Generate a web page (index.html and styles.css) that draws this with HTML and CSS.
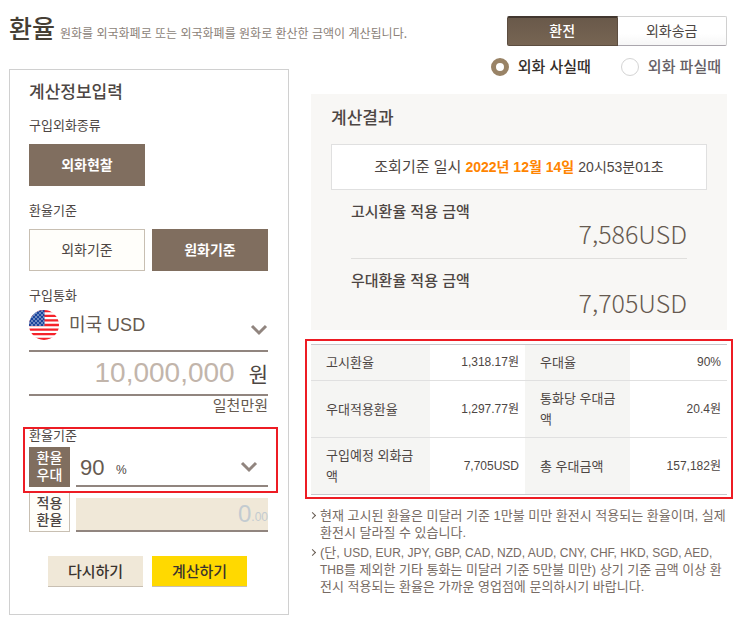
FILE: index.html
```html
<!DOCTYPE html>
<html lang="ko">
<head>
    <meta charset="UTF-8">
    <meta name="viewport" content="width=device-width, initial-scale=1.0">
    <title>환율</title>
    <link rel="stylesheet" href="styles.css">
</head>
<body>
    <div class="page">
        <div class="left">
            <header class="title">
                <h1>환율</h1>
                <p>원화를 외국화폐로 또는 외국화폐를 원화로 환산한 금액이 계산됩니다.</p>
            </header>

            <form class="card">
                <h2>계산정보입력</h2>

                <div class="group">
                    <div class="label">구입외화종류</div>
                    <div class="choices">
                        <button type="button" class="choice active">외화현찰</button>
                    </div>
                </div>

                <div class="group">
                    <div class="label">환율기준</div>
                    <div class="choices">
                        <button type="button" class="choice">외화기준</button>
                        <button type="button" class="choice active">원화기준</button>
                    </div>
                </div>

                <div class="group">
                    <label class="label" for="currency">구입통화</label>
                    <div class="currency">
                        <svg class="flag" viewBox="0 0 30 30" aria-hidden="true">
                            <defs>
                                <clipPath id="round"><circle cx="15" cy="15" r="15"/></clipPath>
                                <pattern id="stars" width="4" height="4" patternUnits="userSpaceOnUse">
                                    <circle cx="1" cy="1" r="0.7" fill="#fff"/>
                                    <circle cx="3" cy="3" r="0.7" fill="#fff"/>
                                </pattern>
                            </defs>
                            <g clip-path="url(#round)">
                                <rect width="30" height="30" fill="#fff"/>
                                <path stroke="#f5222a" stroke-width="2.3" d="M0 1.1h30M0 5.8h30M0 10.4h30M0 15h30M0 19.6h30M0 24.2h30M0 28.9h30"/>
                                <rect width="15.5" height="16" fill="#1c469c"/>
                                <rect width="15.5" height="16" fill="url(#stars)"/>
                            </g>
                        </svg>
                        <select id="currency">
                            <option>미국 USD</option>
                        </select>
                        <svg class="arrow" viewBox="0 0 18 12" aria-hidden="true"><path d="M2 2l7 7 7-7"/></svg>
                    </div>
                    <div class="amount">
                        <input type="text" id="amount" value="10,000,000" aria-label="금액">
                        <label for="amount">원</label>
                    </div>
                    <div class="amount-text">일천만원</div>
                </div>

                <div class="rate">
                    <div class="marked">
                        <div class="label">환율기준</div>
                        <div class="rate-row">
                            <label class="tag active" for="discount">환율<br>우대</label>
                            <div class="field">
                                <select id="discount">
                                    <option>90</option>
                                </select>
                                <span class="percent">%</span>
                                <svg class="arrow" viewBox="0 0 18 12" aria-hidden="true"><path d="M2 2l7 7 7-7"/></svg>
                            </div>
                        </div>
                    </div>
                    <div class="rate-row">
                        <label class="tag" for="applied">적용<br>환율</label>
                        <div class="field disabled">
                            <input type="text" id="applied" value="0" disabled>
                            <span class="decimals">.00</span>
                        </div>
                    </div>
                </div>

                <div class="actions">
                    <button type="reset">다시하기</button>
                    <button type="button" class="primary">계산하기</button>
                </div>
            </form>
        </div>

        <div class="right">
            <div class="tabs">
                <button type="button" class="tab active">환전</button>
                <button type="button" class="tab">외화송금</button>
            </div>
            <div class="radios">
                <label><input type="radio" name="side" checked>외화 사실때</label>
                <label><input type="radio" name="side">외화 파실때</label>
            </div>

            <section class="result">
                <h2>계산결과</h2>
                <div class="date">조회기준 일시 <strong>2022년 12월 14일</strong> <span>20시53분01초</span></div>
                <dl>
                    <div class="item">
                        <dt>고시환율 적용 금액</dt>
                        <dd>7,586USD</dd>
                    </div>
                    <div class="item">
                        <dt>우대환율 적용 금액</dt>
                        <dd>7,705USD</dd>
                    </div>
                </dl>
            </section>

            <div class="marked rates">
                <table>
                    <colgroup>
                        <col class="th1">
                        <col class="td1">
                        <col class="th2">
                        <col>
                    </colgroup>
                    <tr>
                        <th scope="row">고시환율</th>
                        <td>1,318.17원</td>
                        <th scope="row">우대율</th>
                        <td>90%</td>
                    </tr>
                    <tr>
                        <th scope="row">우대적용환율</th>
                        <td>1,297.77원</td>
                        <th scope="row">통화당 우대금액</th>
                        <td>20.4원</td>
                    </tr>
                    <tr>
                        <th scope="row">구입예정 외화금액</th>
                        <td>7,705USD</td>
                        <th scope="row">총 우대금액</th>
                        <td>157,182원</td>
                    </tr>
                </table>
            </div>

            <ul class="notes">
                <li>현재 고시된 환율은 미달러 기준 1만불 미만 환전시 적용되는 환율이며, 실제 환전시 달라질 수 있습니다.</li>
                <li>(단, <span class="codes">USD, EUR, JPY, GBP, CAD, NZD, AUD, CNY, CHF, HKD, SGD, AED, THB</span>를 제외한 기타 통화는 미달러 기준 5만불 미만) 상기 기준 금액 이상 환전시 적용되는 환율은 가까운 영업점에 문의하시기 바랍니다.</li>
            </ul>
        </div>
    </div>
</body>
</html>
```
FILE: styles.css
```css
* {
    box-sizing: border-box;
}

body {
    margin: 0;
    background: #fff;
    color: #4d4643;
    font-family: "Liberation Sans", "Noto Sans CJK KR", sans-serif;
    font-size: 13px;
}

h1, h2, p, dl, dd, ul {
    margin: 0;
    padding: 0;
}

button, input, select {
    font-family: inherit;
    color: inherit;
    margin: 0;
    padding: 0;
    border: 0;
    border-radius: 0;
    background: none;
}

select {
    appearance: none;
}

.page {
    display: grid;
    grid-template-columns: 280fr 416fr;
    column-gap: 22px;
    padding: 0 18px 0 9px;
}

.left, .right {
    min-width: 0;
}

/* Page title */
.title {
    display: flex;
    align-items: baseline;
    gap: 5px;
    height: 69px;
    padding-top: 11px;
    font-family: "Noto Sans CJK KR", sans-serif;
    white-space: nowrap;
}

.title h1 {
    font-size: 25px;
    font-weight: 500;
    line-height: 32px;
    color: #463f35;
}

.title p {
    font-size: 12px;
    color: #8b7f78;
}

h2 {
    font-size: 17px;
    font-weight: 500;
    line-height: 24px;
}

/* Input form */
.card {
    border: 1px solid #d0d0d0;
    padding: 11px 20px 27px 19px;
}

.group {
    margin-top: 15px;
}

h2 + .group {
    margin-top: 11px;
}

.label {
    display: block;
    line-height: 20px;
}

.choices {
    display: grid;
    grid-template-columns: 1fr 1fr;
    gap: 7px;
    margin-top: 8px;
}

.choice {
    height: 42px;
    padding-bottom: 2px;
    border: 1px solid #c8bfb2;
    background: #fffefa;
    font-size: 14px;
}

.choice.active {
    border-color: #806e5f;
    background: #806e5f;
    color: #fff;
    font-weight: bold;
}

.currency {
    display: flex;
    align-items: flex-start;
    gap: 10px;
    height: 42px;
    margin-top: 4px;
    border-bottom: 2px solid #91857f;
}

.flag {
    width: 30px;
    height: 30px;
}

.currency select {
    flex: 1;
    min-width: 0;
    height: 30px;
    font-size: 18px;
    color: #665a50;
}

.arrow {
    width: 18px;
    height: 12px;
    fill: none;
    stroke: #91857f;
    stroke-width: 3;
}

.currency .arrow {
    margin-top: 14px;
}

.amount {
    display: flex;
    align-items: center;
    gap: 14px;
    height: 44px;
    border-bottom: 2px solid #91857f;
}

.amount input {
    flex: 1;
    min-width: 0;
    font-size: 28px;
    text-align: right;
    color: #c2b5ab;
}

.amount label {
    font-size: 21px;
}

.amount-text {
    font-size: 15px;
    line-height: 20px;
    text-align: right;
    color: #665a50;
}

.rate {
    margin-top: 10px;
}

.rate-row {
    display: flex;
    align-items: flex-end;
    gap: 6px;
    margin-top: 1px;
}

.tag {
    width: 41px;
    padding: 2px 0;
    border: 1px solid #c8bfb2;
    background: #fffefa;
    font-size: 14px;
    font-weight: 500;
    line-height: 17px;
    text-align: center;
}

.tag.active {
    border-color: #806e5f;
    background: #806e5f;
    color: #fff;
}

.field {
    display: flex;
    align-items: center;
    flex: 1;
    min-width: 0;
    height: 38px;
    padding: 0 10px 0 4px;
    border-bottom: 2px solid #91857f;
}

.field select {
    width: 36px;
    font-size: 22px;
    color: #665a50;
}

.percent {
    padding-top: 6px;
    font-size: 12px;
}

.field .arrow {
    margin-left: auto;
}

.field.disabled {
    height: 34px;
    padding: 0;
    background: #f0e8d8;
    color: #c3cbd0;
}

.field input {
    flex: 1;
    min-width: 0;
    font-size: 24px;
    text-align: right;
}

.decimals {
    padding-top: 6px;
    font-size: 12px;
}

/* Red frame round the highlighted values */
.marked {
    position: relative;
}

.marked::after {
    content: "";
    position: absolute;
    inset: 1px -10px -6px -6px;
    border: 2px solid #ed1c24;
    pointer-events: none;
}

.rate .marked + .rate-row {
    margin-top: 5px;
}

.actions {
    display: flex;
    justify-content: center;
    gap: 9px;
    margin-top: 24px;
    padding-right: 2px;
}

.actions button {
    width: 95px;
    height: 31px;
    padding-bottom: 2px;
    border-bottom: 1px solid #c8bfb2;
    background: #f0e8d8;
    font-size: 15px;
    font-weight: 500;
    color: #3a332e;
}

.actions .primary {
    background: #ffd900;
}

/* Tabs and radios */
.tabs {
    display: flex;
    width: 220px;
    margin: 16px 0 0 auto;
}

.tab {
    flex: 1;
    height: 30px;
    padding-bottom: 2px;
    border: 1px solid #d0d0d0;
    border-left: 0;
    border-bottom-color: #aaa6ad;
    border-radius: 0 2px 2px 0;
    background: linear-gradient(#fff 60%, #f6f6f6);
    font-size: 14px;
}

.tab.active {
    border: 1px solid #5c4d40;
    border-top: 2px solid #42372f;
    border-radius: 2px 0 0 2px;
    background: linear-gradient(#69594a, #776553);
    color: #fff;
    font-weight: 500;
    padding-bottom: 4px;
}

.radios {
    display: flex;
    justify-content: flex-end;
    gap: 30px;
    margin-top: 11px;
    padding-right: 6px;
    font-size: 15px;
    font-weight: 500;
    line-height: 20px;
}

.radios label {
    display: flex;
    align-items: center;
    gap: 9px;
    color: #665f66;
}

.radios label:first-child {
    color: #332e2b;
}

.radios input {
    appearance: none;
    width: 18px;
    height: 18px;
    border: 1px solid #d4d4d4;
    border-radius: 50%;
    background: #fff;
}

.radios input:checked {
    border: 5px solid #998366;
}

/* Result */
.result {
    margin-top: 17px;
    padding: 13px 20px 17px;
    background: #f8f7f5;
}

.date {
    margin-top: 13px;
    padding: 11px 0;
    border: 1px solid #e0e0e0;
    background: #fff;
    font-size: 15px;
    line-height: 22px;
    text-align: center;
}

.date strong, .date span {
    font-size: 14px;
}

.date strong {
    color: #ff8400;
}

.result dl {
    padding: 0 20px;
}

.item {
    padding-top: 12px;
}

.item:first-child {
    padding-bottom: 14px;
    border-bottom: 1px solid #e0dfdd;
}

.item dt {
    font-size: 15px;
    font-weight: 500;
    line-height: 20px;
}

.item dd {
    font-family: "Noto Sans CJK KR", sans-serif;
    font-size: 25px;
    font-weight: 300;
    line-height: 22px;
    text-align: right;
    color: #665a50;
}

.rates {
    margin-top: 14px;
}

.rates::after {
    inset: -5px -6px -4px;
}

table {
    width: 100%;
    table-layout: fixed;
    border-collapse: collapse;
    border-top: 1px solid #c8c8cc;
    border-bottom: 1px solid #c8c8cc;
}

.th1 {
    width: 119px;
}

.td1 {
    width: 95px;
}

.th2 {
    width: 105px;
}

th, td {
    border-bottom: 1px solid #e0e0e0;
    line-height: 21px;
}

tr:last-child th, tr:last-child td {
    border-bottom-color: #c8c8cc;
}

th {
    padding: 7px 10px 7px 15px;
    background: #f5f5f3;
    font-size: 13px;
    font-weight: normal;
    text-align: left;
}

td {
    padding: 7px 6px 7px 0;
    font-size: 12px;
    text-align: right;
}

.notes {
    margin-top: 12px;
    list-style: none;
    line-height: 17px;
    color: #776b64;
}

.notes li {
    position: relative;
    padding-left: 9px;
}

.notes li + li {
    margin-top: 3px;
}

.notes li::before {
    content: "";
    position: absolute;
    top: 6px;
    left: -1px;
    width: 4px;
    height: 4px;
    border-top: 1px solid #665a50;
    border-right: 1px solid #665a50;
    transform: rotate(45deg);
}

.codes {
    font-size: 12px;
    line-height: 12px;
}
```
